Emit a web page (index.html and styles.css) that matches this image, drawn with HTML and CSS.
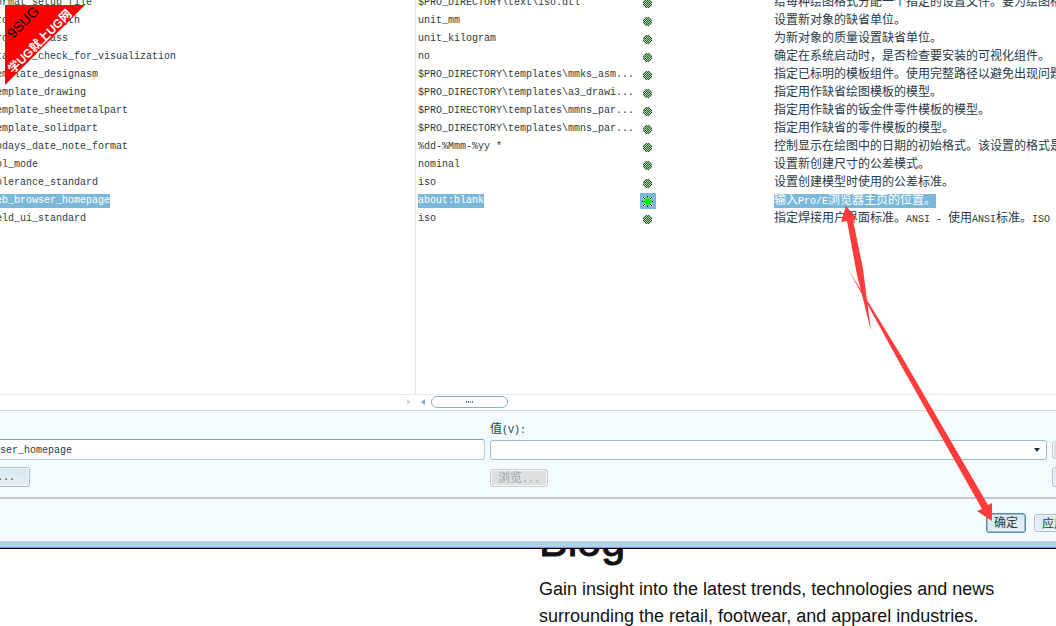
FILE: index.html
```
<!DOCTYPE html>
<html lang="zh-CN">
<head>
<meta charset="utf-8">
<title>选项</title>
<link rel="stylesheet" href="styles.css">
</head>
<body>
<svg class="defs" width="0" height="0" aria-hidden="true">
  <defs>
    <pattern id="check" width="2" height="2" patternUnits="userSpaceOnUse">
      <rect width="2" height="2" fill="#bccdbc"/>
      <rect width="1" height="1" fill="#1e5e1e"/>
      <rect x="1" y="1" width="1" height="1" fill="#1e5e1e"/>
    </pattern>
    <symbol id="dot" viewBox="0 0 16 16"><path shape-rendering="crispEdges" fill="url(#check)" d="M5 4h5v1h1v1h1v5h-1v1h-1v1H5v-1H4v-1H3V6h1V5h1z"/></symbol>
    <symbol id="star" viewBox="0 0 16 16"><path d="M3 4l9 9M12 4l-9 9" stroke="#fff" stroke-width="2"/><path d="M7.500 3v11M2 8.500h11M3 4l9 9M12 4l-9 9" stroke="#000" stroke-width="1"/><circle cx="7.500" cy="8.500" r="3.500" fill="#00f000"/><path d="M7.500 4v9M3 8.500h9" stroke="#00f000" stroke-width="1"/></symbol>
  </defs>
</svg>
<main class="dialog">
  <section class="list">
    <table class="options">
      <colgroup><col class="c-name"><col class="c-value"><col class="c-status"><col class="c-desc"></colgroup>
      <tbody>
        <tr><td>format_setup_file</td><td>$PRO_DIRECTORY\text\iso.dtl</td><td><svg class="mark"><use href="#dot"/></svg></td><td>给每种绘图格式分配一个指定的设置文件。要为绘图格式</td></tr>
        <tr><td>pro_unit_length</td><td>unit_mm</td><td><svg class="mark"><use href="#dot"/></svg></td><td>设置新对象的缺省单位。</td></tr>
        <tr><td>pro_unit_mass</td><td>unit_kilogram</td><td><svg class="mark"><use href="#dot"/></svg></td><td>为新对象的质量设置缺省单位。</td></tr>
        <tr><td>startup_check_for_visualization</td><td>no</td><td><svg class="mark"><use href="#dot"/></svg></td><td>确定在系统启动时，是否检查要安装的可视化组件。</td></tr>
        <tr><td>template_designasm</td><td>$PRO_DIRECTORY\templates\mmks_asm...</td><td><svg class="mark"><use href="#dot"/></svg></td><td>指定已标明的模板组件。使用完整路径以避免出现问题</td></tr>
        <tr><td>template_drawing</td><td>$PRO_DIRECTORY\templates\a3_drawi...</td><td><svg class="mark"><use href="#dot"/></svg></td><td>指定用作缺省绘图模板的模型。</td></tr>
        <tr><td>template_sheetmetalpart</td><td>$PRO_DIRECTORY\templates\mmns_par...</td><td><svg class="mark"><use href="#dot"/></svg></td><td>指定用作缺省的钣金件零件模板的模型。</td></tr>
        <tr><td>template_solidpart</td><td>$PRO_DIRECTORY\templates\mmns_par...</td><td><svg class="mark"><use href="#dot"/></svg></td><td>指定用作缺省的零件模板的模型。</td></tr>
        <tr><td>todays_date_note_format</td><td>%dd-%Mmm-%yy *</td><td><svg class="mark"><use href="#dot"/></svg></td><td>控制显示在绘图中的日期的初始格式。该设置的格式是</td></tr>
        <tr><td>tol_mode</td><td>nominal</td><td><svg class="mark"><use href="#dot"/></svg></td><td>设置新创建尺寸的公差模式。</td></tr>
        <tr><td>tolerance_standard</td><td>iso</td><td><svg class="mark"><use href="#dot"/></svg></td><td>设置创建模型时使用的公差标准。</td></tr>
        <tr class="selected"><td><span class="hit">web_browser_homepage</span></td><td><span class="hit">about:blank</span></td><td><svg class="mark"><use href="#star"/></svg></td><td><span class="hit">输入<span class="latin">Pro/E</span>浏览器主页的位置。</span></td></tr>
        <tr><td>weld_ui_standard</td><td>iso</td><td><svg class="mark"><use href="#dot"/></svg></td><td>指定焊接用户界面标准。<span class="latin">ANSI - </span>使用<span class="latin">ANSI</span>标准。<span class="latin">ISO</span></td></tr>
      </tbody>
    </table>
  </section>
  <div class="scroll">
    <svg class="tick" viewBox="0 0 4 6"><path d="M0 0l4 3-4 3z" fill="#c9dce8"/></svg>
    <svg class="tick" viewBox="0 0 4 6"><path d="M4 0L0 3l4 3z" fill="#7fadc6"/></svg>
    <div class="thumb"><i></i><i></i><i></i><i></i></div>
  </div>
  <form class="form">
    <label class="label" for="value">值<span class="latin">(V):</span></label>
    <input class="field name" type="text" value="web_browser_homepage" aria-label="名称">
    <div class="combo">
      <select class="field" id="value"><option></option></select>
      <svg class="caret" viewBox="0 0 6 4"><path d="M0 0h6L3 4z" fill="#22333b"/></svg>
    </div>
    <button class="btn off side" type="button" disabled aria-label="添加"></button>
    <button class="btn low find" type="button">查找<span class="latin">(F)...</span></button>
    <button class="btn low off browse" type="button" disabled>浏览<span class="latin">...</span></button>
    <button class="btn low side" type="button" aria-label="删除"></button>
  </form>
  <footer class="actions">
    <button class="btn ok" type="button">确定</button>
    <button class="btn apply" type="button">应用</button>
  </footer>
</main>
<article class="blog">
  <h1>Blog</h1>
  <p>Gain insight into the latest trends, technologies and news surrounding the retail, footwear, and apparel industries.</p>
</article>
<svg class="badge" viewBox="0 0 80 80">
  <path d="M0 0h80L0 80z" fill="#f00"/>
  <text class="badge-top" transform="translate(8 34) rotate(-45)">9SUG</text>
  <text class="badge-main" transform="translate(8 69) rotate(-45)">学UG就上UG网</text>
</svg>
<svg class="arrows" viewBox="0 0 160 330" aria-hidden="true">
  <path d="M6 6l11 13-4 1 10 49 8 62-14-56L7 21l-6 1z" fill="#ff3b3b"/>
  <path d="M8 69L62 157L148 305l4-2 0 18-15-10 5-2L58 160z" fill="#ff3b3b"/>
</svg>
</body>
</html>
```
FILE: styles.css
```
* { box-sizing: border-box; }
body {
  position: relative;
  margin: 0;
  min-height: 100vh;
  overflow: hidden;
  background: #fff;
  color: #2a3a44;
  font-family: "Liberation Mono", "Noto Sans CJK SC", monospace;
  font-size: 12px;
}
button, input, select { font: inherit; color: inherit; }
.defs { position: absolute; }
.latin { font-size: 10px; }

.dialog {
  display: flex;
  flex-direction: column;
  overflow: hidden;
  background: #f3fbff;
  border-bottom: 1px solid #000;
}
.list {
  display: flex;
  align-items: flex-start;
  min-height: 394px;
  margin-left: -10px;
  background: linear-gradient(#dfe4e8, #dfe4e8) 425px 0 / 1px 100% no-repeat #fff;
}
.options {
  table-layout: fixed;
  width: 100%;
  margin-top: -6px;
  border-collapse: collapse;
  white-space: nowrap;
}
.c-name { width: 426px; }
.c-value { width: 222px; }
.c-status { width: 134px; }
.options td {
  height: 18px;
  padding: 0;
  line-height: 16px;
  font-size: 10px;
  overflow: hidden;
}
.options td:nth-child(2) { padding-left: 2px; }
.options td:nth-child(3) { padding-left: 2px; }
.options td:nth-child(4) { padding-left: 2px; font-size: 12px; }
.mark { display: block; width: 16px; height: 16px; }
.hit { display: inline-block; height: 14px; line-height: 14px; background: #7ab8d9; color: #fff; }
.selected .mark { background: #7ab8d9; }

.scroll {
  display: flex;
  align-items: center;
  gap: 10px;
  height: 16px;
  padding: 0 0 2px 407px;
  background: #fff;
  border-top: 1px solid #e3edf2;
}
.tick { width: 4px; height: 6px; }
.thumb {
  display: flex;
  align-items: center;
  justify-content: center;
  gap: 1px;
  width: 77px;
  height: 12px;
  margin-left: -4px;
  border: 1px solid #86afc2;
  border-radius: 6px;
}
.thumb i { width: 1px; height: 2px; background: #4d86a3; }

.form {
  display: grid;
  grid-template-columns: 537px minmax(0, 1fr) 4px;
  grid-template-rows: 14px 21px 21px;
  gap: 6px 5px;
  align-items: center;
  height: 89px;
  margin-left: -52px;
  padding-top: 8px;
  border-top: 1px solid #cbd9e3;
  border-bottom: 2px solid #c2c6c8;
}
.label { grid-column: 2 / 4; align-self: end; margin-bottom: -5px; line-height: 14px; }
.field {
  width: 100%;
  height: 21px;
  padding: 2px 3px 0;
  border: 1px solid #9bbbcd;
  border-radius: 3px;
  background: #fff;
  font-size: 10px;
}
.name { grid-column: 1; border-color: #7ba3bd #a9d2ee #a9d2ee; }
.combo { display: grid; align-items: center; }
.combo .field { grid-area: 1 / 1; height: 20px; appearance: none; }
.caret { grid-area: 1 / 1; justify-self: end; width: 6px; height: 4px; margin-right: 7px; pointer-events: none; }
.btn {
  height: 20px;
  padding: 1px 0 0;
  border: 1px solid #a9bcc7;
  border-radius: 3px;
  background: linear-gradient(#d9e8f1, #e6eff4);
  box-shadow: inset 0 0 0 1px #f2f8fb;
  line-height: 16px;
  white-space: nowrap;
}
.low { align-self: end; }
.off { height: 18px; border-color: #c9cccd; background: #dedfdf; color: #9aa5a9; }
.side { width: 60px; }
.find { width: 82px; padding-right: 14px; text-align: right; }
.browse { width: 58px; }

.actions {
  display: flex;
  align-items: center;
  justify-content: flex-end;
  gap: 8px;
  height: 48px;
  padding-top: 6px;
  border-bottom: 6px solid #b8cfea;
  box-shadow: 0 1px #20c4dc;
  margin-bottom: 1px;
}
.ok { width: 40px; padding-top: 2px; border-color: #5e8ba4; box-shadow: inset 0 0 0 1px #9cbccd; }
.apply { width: 40px; height: 18px; padding-top: 2px; margin-right: -18px; }

.blog {
  width: 480px;
  margin-left: 539px;
  overflow: hidden;
  color: #111;
  font-family: "Liberation Sans", Arial, sans-serif;
}
.blog h1 { margin: -32px 0 0; font-size: 43px; font-weight: 400; line-height: 48px; -webkit-text-stroke: 1px #111; }
.blog p { margin: 11px 0 0; font-size: 18px; line-height: 27px; }

.badge { position: absolute; left: 5px; top: 5px; width: 80px; height: 80px; }
.badge-top { font: 14px "Liberation Sans", sans-serif; fill: #000; }
.badge-main { font: bold 12px "Liberation Sans", "Noto Sans CJK SC", sans-serif; fill: #fff; }
.arrows { position: absolute; left: 840px; top: 200px; width: 160px; height: 330px; pointer-events: none; }
```
